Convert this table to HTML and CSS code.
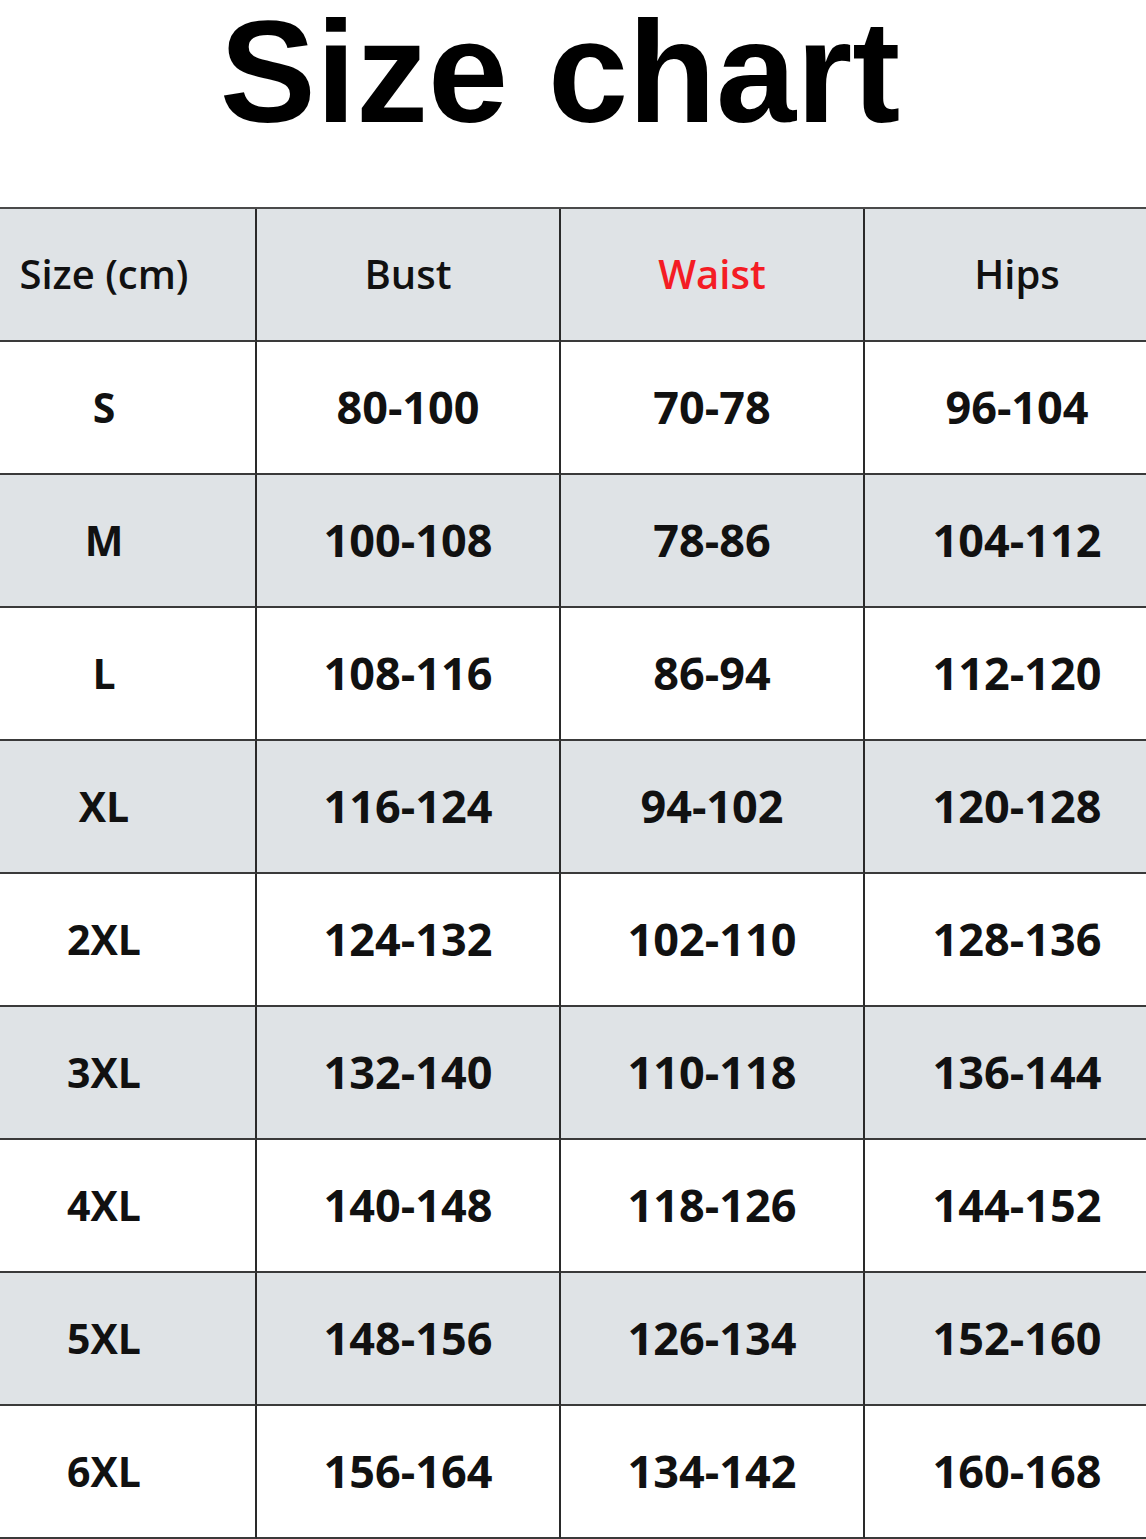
FILE: index.html
```html
<!DOCTYPE html>
<html>
<head>
<meta charset="utf-8">
<link rel="stylesheet" href="styles.css">
</head>
<body>
<div class="page">
  <h1 class="title">Size chart</h1>
  <div class="table">
    <div class="cell head">Size (cm)</div>
    <div class="cell head">Bust</div>
    <div class="cell head red">Waist</div>
    <div class="cell head last">Hips</div>

    <div class="cell size">S</div><div class="cell">80-100</div><div class="cell">70-78</div><div class="cell last">96-104</div>
    <div class="cell size alt">M</div><div class="cell alt">100-108</div><div class="cell alt">78-86</div><div class="cell alt last">104-112</div>
    <div class="cell size">L</div><div class="cell">108-116</div><div class="cell">86-94</div><div class="cell last">112-120</div>
    <div class="cell size alt">XL</div><div class="cell alt">116-124</div><div class="cell alt">94-102</div><div class="cell alt last">120-128</div>
    <div class="cell size">2XL</div><div class="cell">124-132</div><div class="cell">102-110</div><div class="cell last">128-136</div>
    <div class="cell size alt">3XL</div><div class="cell alt">132-140</div><div class="cell alt">110-118</div><div class="cell alt last">136-144</div>
    <div class="cell size">4XL</div><div class="cell">140-148</div><div class="cell">118-126</div><div class="cell last">144-152</div>
    <div class="cell size alt">5XL</div><div class="cell alt">148-156</div><div class="cell alt">126-134</div><div class="cell alt last">152-160</div>
    <div class="cell size">6XL</div><div class="cell">156-164</div><div class="cell">134-142</div><div class="cell last">160-168</div>
  </div>
</div>
</body>
</html>
```
FILE: styles.css
```css
html, body {
  margin: 0;
  padding: 0;
  background: #ffffff;
}
body {
  overflow: hidden;
}
.page {
  width: 1146px;
  height: 1539px;
  overflow: hidden;
  padding-top: 1px;
  box-sizing: border-box;
}
.title {
  margin: 0;
  padding-right: 26px;
  font-family: "Liberation Sans", Arial, sans-serif;
  font-weight: 700;
  font-size: 144px;
  line-height: 144px;
  text-align: center;
  color: #000;
}
.table {
  margin-top: 62px;
  margin-left: -47px;
  width: 1216px;
  display: grid;
  grid-template-columns: repeat(4, 304px);
  grid-auto-rows: 133px;
  border-top: 2px solid #4a4a4a;
}
.cell {
  box-sizing: border-box;
  display: flex;
  align-items: center;
  justify-content: center;
  border-right: 2px solid #2a2a2a;
  border-bottom: 2px solid #3a3a3a;
  background: #ffffff;
  font-family: "Open Sans", "Noto Sans", sans-serif;
  font-weight: 700;
  font-size: 45px;
  color: #111;
  padding-bottom: 2px;
}
.cell.size {
  font-size: 41px;
}
.cell.last {
  border-right: none;
}
.head {
  background: #dfe3e6;
  font-weight: 600;
  font-size: 40px;
}
.alt {
  background: #dfe3e6;
}
.red {
  color: #f41c24;
}
```
